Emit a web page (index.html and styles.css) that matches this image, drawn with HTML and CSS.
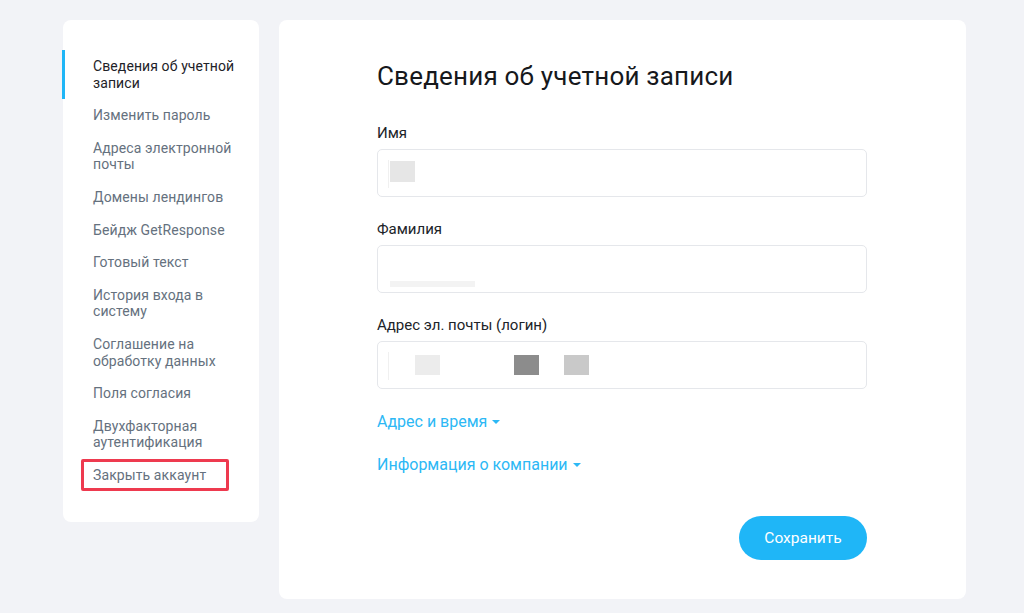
FILE: index.html
```html
<!DOCTYPE html>
<html lang="ru">
<head>
    <meta charset="UTF-8">
    <meta name="viewport" content="width=device-width, initial-scale=1.0">
    <title>Сведения об учетной записи</title>
    <link rel="stylesheet" href="styles.css">
</head>
<body>
    <div class="page">
        <nav class="sidebar">
            <a class="nav-item active" href="#">Сведения об учетной записи</a>
            <a class="nav-item" href="#">Изменить пароль</a>
            <a class="nav-item" href="#">Адреса электронной почты</a>
            <a class="nav-item" href="#">Домены лендингов</a>
            <a class="nav-item" href="#">Бейдж GetResponse</a>
            <a class="nav-item" href="#">Готовый текст</a>
            <a class="nav-item" href="#">История входа в систему</a>
            <a class="nav-item" href="#">Соглашение на обработку данных</a>
            <a class="nav-item" href="#">Поля согласия</a>
            <a class="nav-item" href="#">Двухфакторная аутентификация</a>
            <a class="nav-item marked" href="#">Закрыть аккаунт</a>
        </nav>

        <main class="content">
            <form class="form">
                <h1 class="title">Сведения об учетной записи</h1>

                <label class="label">Имя</label>
                <div class="input">
                    <span class="cursor"></span>
                    <span class="blur b-name"></span>
                </div>

                <label class="label">Фамилия</label>
                <div class="input">
                    <span class="blur b-strip"></span>
                </div>

                <label class="label">Адрес эл. почты (логин)</label>
                <div class="input">
                    <span class="cursor"></span>
                    <span class="blur b-mail1"></span>
                    <span class="blur b-mail2"></span>
                    <span class="blur b-mail3"></span>
                </div>

                <a class="toggle" href="#">Адрес и время<span class="caret"></span></a>
                <a class="toggle" href="#">Информация о компании<span class="caret"></span></a>

                <div class="actions">
                    <button class="btn-save" type="button">Сохранить</button>
                </div>
            </form>
        </main>
    </div>
</body>
</html>
```

FILE: styles.css
```css
* {
    margin: 0;
    padding: 0;
    box-sizing: border-box;
    font-family: Roboto, "Liberation Sans", sans-serif;
}
body {
    background: #f2f3f7;
}
.page {
    display: flex;
    align-items: flex-start;
    gap: 20px;
    padding: 20px 58px 14px 63px;
}
.sidebar {
    width: 196px;
    background: #fff;
    border-radius: 8px;
    padding: 30px 0 30px;
    display: flex;
    flex-direction: column;
}
.nav-item {
    position: relative;
    display: block;
    padding: 8px 14px 8px 30px;
    font-size: 14px;
    line-height: 16.6px;
    color: #65717e;
    text-decoration: none;
    letter-spacing: 0.1px;
}
.nav-item.active {
    color: #1e2228;
}
.nav-item.active::before {
    content: "";
    position: absolute;
    left: -1px;
    top: 0;
    bottom: 0;
    width: 3px;
    background: #1fb6f7;
}
.nav-item.marked::after {
    content: "";
    box-sizing: border-box;
    position: absolute;
    left: 18px;
    top: 0;
    width: 148px;
    height: 32px;
    border: 3px solid #ee3a4f;
    border-radius: 2px;
}
.content {
    width: 687px;
    height: 579px;
    background: #fff;
    border-radius: 8px;
    padding: 40px 99px 39px 98px;
}
.form {
    display: flex;
    flex-direction: column;
    height: 100%;
}
.title {
    font-size: 26px;
    line-height: 32px;
    font-weight: 400;
    color: #16181c;
    letter-spacing: 0.2px;
    margin-bottom: 31px;
}
.label {
    font-size: 15px;
    line-height: 20px;
    color: #202328;
    margin-bottom: 6px;
}
.input {
    position: relative;
    height: 48px;
    border: 1px solid #e5e7eb;
    border-radius: 5px;
    margin-bottom: 22px;
}
.cursor {
    position: absolute;
    left: 10px;
    top: 10px;
    width: 1px;
    height: 28px;
    background: #f0f0f0;
}
.blur {
    position: absolute;
    background: #e6e6e6;
}
.b-name {
    left: 12px;
    top: 11px;
    width: 25px;
    height: 21px;
}
.b-strip {
    left: 12px;
    top: 35px;
    width: 85px;
    height: 6px;
    background: #f3f3f3;
}
.b-mail1 {
    left: 37px;
    top: 13px;
    width: 25px;
    height: 20px;
    background: #ececec;
}
.b-mail2 {
    left: 136px;
    top: 13px;
    width: 25px;
    height: 20px;
    background: #8c8c8c;
}
.b-mail3 {
    left: 186px;
    top: 13px;
    width: 25px;
    height: 20px;
    background: #c9c9c9;
}
.toggle {
    align-self: flex-start;
    display: flex;
    align-items: center;
    font-size: 16px;
    line-height: 20px;
    color: #2cb8f5;
    text-decoration: none;
    margin-top: 1px;
    margin-bottom: 22px;
}
.caret {
    width: 0;
    height: 0;
    margin-left: 5px;
    border-left: 4px solid transparent;
    border-right: 4px solid transparent;
    border-top: 4px solid #2cb8f5;
}
.actions {
    margin-top: auto;
    display: flex;
    justify-content: flex-end;
}
.btn-save {
    width: 128px;
    height: 44px;
    border: none;
    border-radius: 22px;
    background: #1fb6f7;
    color: #fff;
    font-size: 15.5px;
    cursor: pointer;
}
```
